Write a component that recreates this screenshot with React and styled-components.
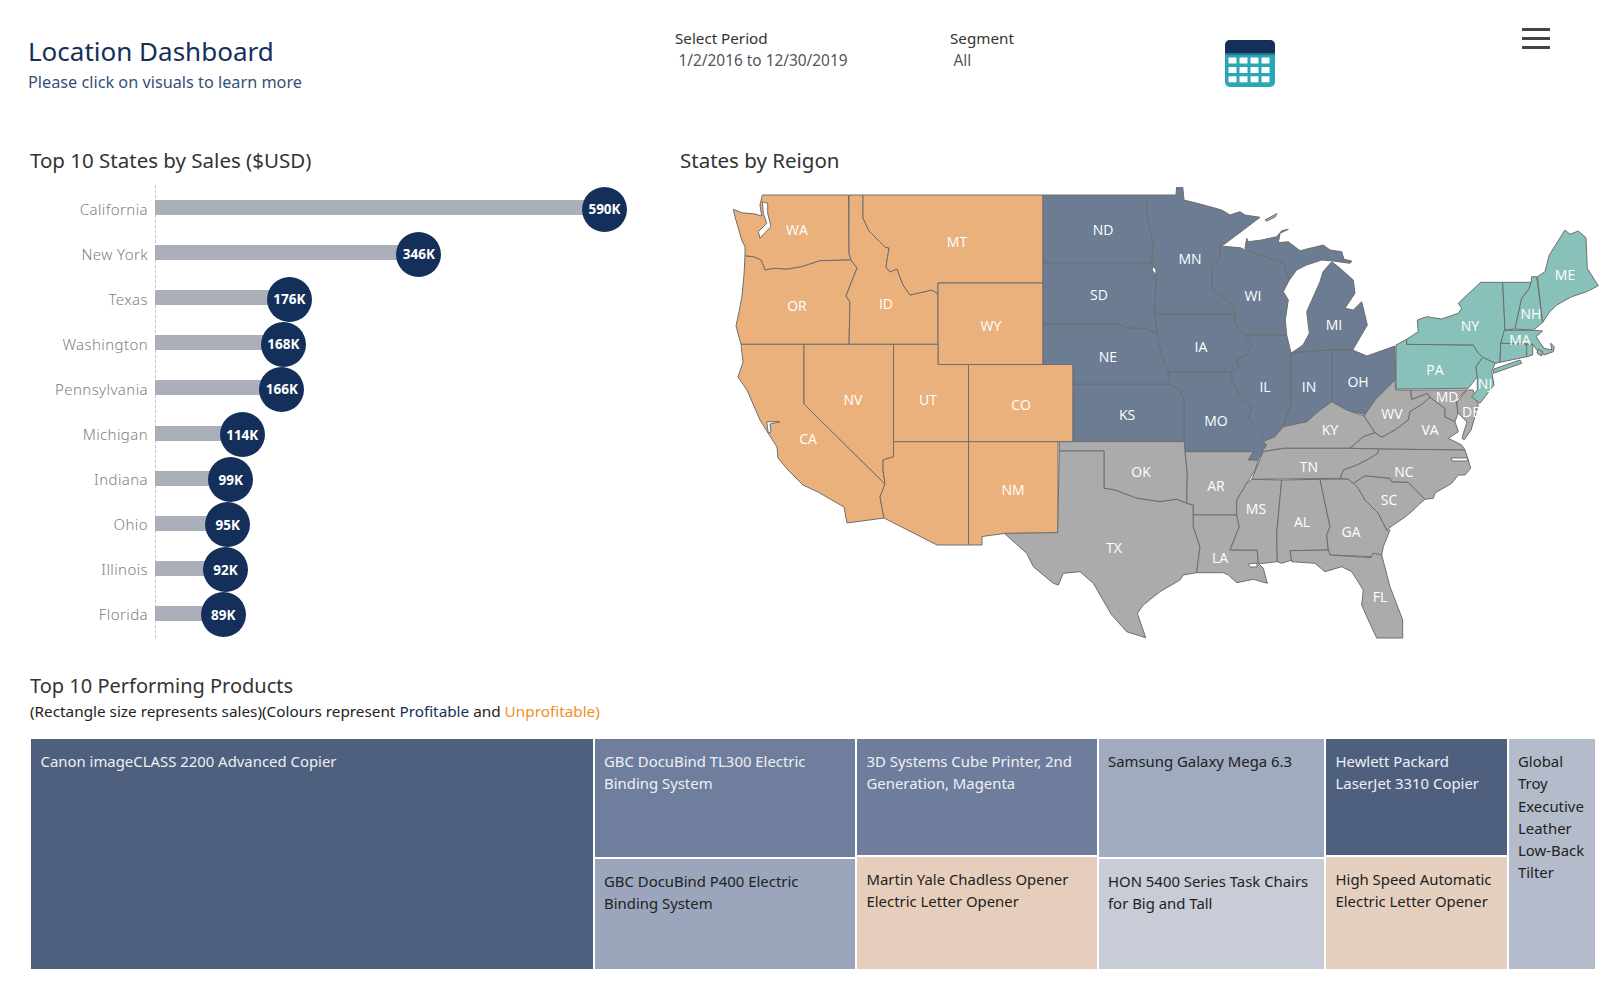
import React from 'react';
import styled, { createGlobalStyle } from 'styled-components';

const ORANGE = '#EBB17C';
const SLATE = '#6B7C93';
const GREY = '#ABABAB';
const TEAL = '#88C1B9';

const GlobalStyle = createGlobalStyle`
  html, body {
    margin: 0;
    padding: 0;
    background: #ffffff;
    font-family: 'Noto Sans', 'Open Sans', sans-serif;
  }
`;

const salesData = [
  { state: 'California', value: 590 },
  { state: 'New York', value: 346 },
  { state: 'Texas', value: 176 },
  { state: 'Washington', value: 168 },
  { state: 'Pennsylvania', value: 166 },
  { state: 'Michigan', value: 114 },
  { state: 'Indiana', value: 99 },
  { state: 'Ohio', value: 95 },
  { state: 'Illinois', value: 92 },
  { state: 'Florida', value: 89 },
];

// outlines are traced in page coordinates, the svg viewBox starts at 680,187
const states = [
  // west
  { fill: ORANGE, pts: '762.3,195 848.5,195 849,253 851,260 820,260.7 801.7,266.7 786.7,269.3 775,268.3 765,270 761,260 753.3,256.7 745,256 745,246.7 741.7,240 735,216.7 733.3,209.3 741.7,212.7 755,214 761.7,216 760,205' },
  { fill: ORANGE, pts: '745,256 753.3,256.7 761,260 765,270 775,268.3 786.7,269.3 801.7,266.7 820,260.7 851,260 857,268 851,283 846,296 850,302 849,344.3 741,344.3 736,326 739,312 742,296 744,275' },
  { fill: ORANGE, pts: '849,195 863,195 863,218 869,231 879,241 885,247 889,248 886,267 890,272 897,269 903,285 910,295 932,290 938,294 938,344.3 849,344.3 850,302 846,296 857,268 851,260 849,253' },
  { fill: ORANGE, pts: '863,195 1043,195 1043,283 938,283 938,294 932,290 910,295 903,285 897,269 890,272 886,267 889,248 885,247 879,241 869,231 863,218' },
  { fill: ORANGE, pts: '938,283 1043,283 1043,364.5 938,364.5' },
  { fill: ORANGE, pts: '741,344.3 804,344.3 804,404 885,484 880,497 884,518 847,523 844,507 818,492 803,485 788,470 778,458 777,447 768,433 760,420 747,390 738,377 743,362' },
  { fill: ORANGE, pts: '804,344.3 893.5,344.3 893.5,456.7 883,460 883,470 885,484 804,404' },
  { fill: ORANGE, pts: '893.5,344.3 938,344.3 938,364.5 968.5,364.5 968.5,441.7 893.5,441.7' },
  { fill: ORANGE, pts: '968.5,364.5 1073,364.5 1073,441.7 968.5,441.7' },
  { fill: ORANGE, pts: '893.5,441.7 968.5,441.7 968.5,545 937,545 884,518 880,497 885,484 883,470 883,460 893.5,456.7' },
  { fill: ORANGE, pts: '968.5,441.7 1058,441.7 1058,533 1004,533.5 982,536.5 982,545 968.5,545' },

  // midwest
  { fill: SLATE, pts: '1043,195 1146.7,195 1146.7,213 1150,225 1153,243 1155,262.7 1043,262.7' },
  { fill: SLATE, pts: '1043,262.7 1155,262.7 1152,270 1157,276 1155,315 1157,333 1147,329 1127,328 1117,324.3 1043,324.3' },
  { fill: SLATE, pts: '1043,324.3 1117,324.3 1127,328 1147,329 1157,333 1161,343 1165,366 1173,384.3 1073,384.3 1073,364.5 1043,364.5' },
  { fill: SLATE, pts: '1073,384.3 1170,384.3 1180,390 1184.3,400 1184.3,441.7 1073,441.7' },
  { fill: SLATE, pts: '1146.7,195 1176,195 1176.7,186 1182.7,186.7 1184,200 1196,203 1210,206.7 1221.7,210 1230,215 1240,211.7 1245,215 1260,217.3 1243.3,230 1223.3,245 1220,246 1219.3,258.3 1211.7,268.3 1211.7,288.3 1233.3,305 1235,314 1155,314 1156,270 1151.7,263.3 1153.3,243.3 1146.7,213.3' },
  { fill: SLATE, pts: '1220,246 1240,247.7 1250,251.7 1265,256.7 1283.3,263.3 1289.3,280 1283.3,291.7 1288.3,300 1285.3,320 1286.7,335 1245,335 1235,323.3 1235,314 1233.3,305 1211.7,288.3 1211.7,268.3 1219.3,258.3' },
  { fill: SLATE, pts: '1245,248.3 1246.7,238.3 1248.3,241.7 1261.7,240 1276.7,236.7 1281.7,230.7 1288.3,229.3 1280,233.3 1278.3,242.7 1288.3,241.7 1300,250.7 1323.3,245 1330,250 1341.7,251.7 1344,259.3 1351.7,261 1350,263.3 1333.3,261 1321.7,260 1306.7,265 1296.7,270 1289.3,280 1283.3,263.3 1265,256.7 1250,251.7' },
  { fill: SLATE, pts: '1331.7,261.7 1338.3,266.7 1353.3,280 1355,293.3 1345,308.3 1353.3,310 1361.7,301.7 1367.3,325 1352.7,350 1331.7,350 1291.7,352.7 1303,345 1309.3,333.3 1306.7,311.7 1320,281.7 1323,271.7' },
  { fill: SLATE, pts: '1155,314 1235,314 1235,323.3 1251,343.3 1248.3,353.3 1236.7,360 1239.3,366.7 1231.7,372.3 1168.3,372.3 1161,353.3 1157,333' },
  { fill: SLATE, pts: '1168.3,372.3 1231.7,372.3 1231.7,378.3 1240,396.7 1251.7,406.7 1248.3,418.3 1261.7,431.7 1263.3,441.7 1266.7,445 1258.3,460 1248.3,460 1253.3,451.7 1185,451.7 1184.3,441.7 1184.3,400 1180,390 1170,384.3' },
  { fill: SLATE, pts: '1245,335 1286.7,335 1291,352.7 1291,403.3 1283.3,426.7 1275,436.7 1266.7,440 1263.3,441.7 1261.7,431.7 1248.3,418.3 1251.7,406.7 1240,396.7 1231.7,378.3 1231.7,372.3 1239.3,366.7 1236.7,360 1248.3,353.3 1251,343.3' },
  { fill: SLATE, pts: '1291,352.7 1331.7,350 1331.7,401.7 1320,410 1306.7,421.7 1283.3,426.7 1291,403.3' },
  { fill: SLATE, pts: '1331.7,350 1352.7,350 1366.7,356 1395,346 1395.7,380 1378.3,400 1366.7,415 1346.7,410 1331.7,401.7' },

  // south
  { fill: GREY, pts: '1283.3,426.7 1306.7,421.7 1320,410 1331.7,401.7 1346.7,410 1364,416 1375,432.7 1363.3,436.7 1350,448.3 1283.3,448.3 1261.7,451.7 1266.7,445 1263.3,441.7 1266.7,440 1275,436.7' },
  { fill: GREY, pts: '1364,416 1375,400 1395,380 1395.7,390 1410.7,390 1411.7,399.3 1427.3,393.3 1430,397.3 1423.3,403.3 1410,411.7 1408.3,420 1395,430 1381.7,437.3 1375,432.7' },
  { fill: GREY, pts: '1375,432.7 1381.7,437.3 1395,430 1408.3,420 1410,411.7 1423.3,403.3 1430,397.3 1445,408.3 1445,416.7 1455,421.7 1458.3,431.7 1448.3,438.3 1461.7,445 1465,450 1378.3,449 1350,448.3 1363.3,436.7' },
  { fill: GREY, pts: '1410.7,390 1466.7,390 1456,400 1458,413 1455,421.7 1445,416.7 1445,408.3 1430,397.3 1427.3,393.3 1411.7,399.3' },
  { fill: GREY, pts: '1466.7,390 1473,390 1478.3,405 1471,430 1464,440 1462,438 1467,422 1458,413 1457,402' },
  { fill: GREY, pts: '1059.3,441.7 1184.3,441.7 1185,451.7 1187.3,473.3 1186.7,503.3 1176.7,499.3 1160,501.7 1136.7,498.3 1115,490 1104,488.3 1104,451 1059.3,451' },
  { fill: GREY, pts: '1059.3,451 1104,451 1104,488.3 1115,490 1136.7,498.3 1160,501.7 1176.7,499.3 1186.7,503.3 1193.3,505 1193.3,526.7 1200,546.7 1196.7,572.7 1183.3,575 1180,580 1160,591.7 1143.3,605 1137.3,613.3 1145.7,637.7 1126.7,631.7 1111.7,615 1093.3,583.3 1080,571.7 1063.3,573.3 1058.3,585 1053.3,583.3 1033.3,566.7 1026.7,553.3 1004.3,533.3 1057.7,532.7' },
  { fill: GREY, pts: '1185,451.7 1253.3,451.7 1248.3,460 1258.3,460 1255,470 1246.7,483.3 1236.7,500 1236.7,515 1193.3,515 1193.3,505 1186.7,503.3 1187.3,473.3' },
  { fill: GREY, pts: '1193.3,515 1236.7,515 1239.3,526.7 1230,550 1257.3,550 1258.3,563.3 1263.3,568.3 1267.3,583.3 1253.3,579.3 1236.7,582.7 1228.3,575 1223.3,572.7 1196.7,572.7 1200,546.7 1193.3,526.7' },
  { fill: GREY, pts: '1251.7,479.3 1281.7,480 1276.7,533.3 1277.3,561.7 1263.3,563.3 1258.3,563.3 1257.3,550 1230,550 1239.3,526.7 1236.7,515 1236.7,500 1246.7,483.3' },
  { fill: GREY, pts: '1281.7,480 1320,479.3 1330,526.7 1326.7,535 1328.3,550 1290,550.7 1291.7,560 1281.7,563.3 1277.3,561.7 1276.7,533.3' },
  { fill: GREY, pts: '1320,479.3 1348,479 1353.3,483.3 1358.3,488.3 1365,500 1378.3,513.3 1386.7,530 1390,530 1383.3,546.7 1381.7,555 1373.3,556.7 1330,555 1328.3,550 1326.7,535 1330,526.7' },
  { fill: GREY, pts: '1290,550.7 1328.3,550 1330,555 1371,557.7 1373.3,553 1381.7,555 1390,586.7 1402.7,620 1402.7,638 1376.7,638 1368.3,620 1361.7,605 1363.3,590 1351.7,571.7 1341.7,566.7 1325,571.7 1315,563.3 1291.7,561.7' },
  { fill: GREY, pts: '1353.3,483.3 1365,475.7 1390,478.3 1391.7,481.7 1408.3,482.3 1425,499.3 1418.3,505 1411.7,511.7 1403.3,518.3 1393.3,525 1386.7,530 1378.3,513.3 1365,500 1358.3,488.3' },
  { fill: GREY, pts: '1340,478.3 1343.3,470 1356.7,465 1366.7,460 1378.3,452.7 1378.3,449 1465,450 1469.3,463.3 1470.7,468.3 1465,475 1458.3,475 1451.7,483.3 1435,493 1433.3,498.3 1425,499.3 1408.3,482.3 1391.7,481.7 1390,478.3 1365,475.7 1353.3,483.3 1348,479' },
  { fill: GREY, pts: '1251.7,479.3 1263.3,451.7 1283.3,448.3 1350,448.3 1378.3,449 1378.3,452.7 1366.7,460 1356.7,465 1343.3,470 1340,478.3' },

  // northeast
  { fill: TEAL, pts: '1396,345 1406.7,339.3 1406.7,344.3 1473.3,345 1478.3,353.3 1482.7,357.3 1476,366.7 1477.3,376.7 1468.3,388.3 1396,389' },
  { fill: TEAL, pts: '1406.7,339.3 1418.3,331.7 1417.3,320 1426.7,316.7 1441.7,319 1458.3,313.3 1461.7,308.3 1458.3,303.3 1480.7,282.3 1502.7,282.3 1505,330 1500.7,343.3 1500,362.3 1495,363.3 1482.7,357.3 1478.3,353.3 1473.3,345 1406.7,344.3' },
  { fill: TEAL, pts: '1482.7,357.3 1495,363.3 1491.7,371.7 1494,385 1480,403.3 1471.7,396.7 1477.3,390 1477.3,376.7 1476,366.7' },
  { fill: TEAL, pts: '1502.7,282.3 1531,282.3 1529.3,288.3 1521.7,298.3 1515,329 1505,330' },
  { fill: TEAL, pts: '1531,282.3 1531.7,276.7 1536.7,276.7 1542.7,322.3 1533.3,330.3 1515,329 1521.7,298.3 1529.3,288.3' },
  { fill: TEAL, pts: '1537.3,276.7 1545,271.7 1549.3,255 1565,230 1570,234.3 1578.3,231 1586,237.7 1587.3,268.3 1598.3,285.7 1586.7,291.7 1571.7,296.7 1556.7,305 1549.3,312.3 1542.7,322.3' },
  { fill: TEAL, pts: '1504.3,330.3 1533.3,330.3 1542.7,331 1536,336.7 1544,348.3 1551.7,350 1550.7,343.3 1554.3,346.7 1553.3,351.7 1544,355 1536.7,350 1532.7,344.3 1500.7,343.3' },
  { fill: TEAL, pts: '1500.7,343.3 1526.7,344.3 1526.7,356.7 1500,362.3' },
  { fill: TEAL, pts: '1526.7,344.3 1532.7,344.3 1532.7,355 1526.7,356.7' },
  { fill: TEAL, pts: '1494,369 1520,360 1521.7,363.3 1493.3,373.3' },
];

// inlets and small islands that sit over the state fills
const waters = [
  { fill: '#fff', pts: '762.3,201.7 767.7,203.3 767.7,213.3 771,226.7 764.3,233.3 760,238.3 758.3,231.7 766.7,223.3 763.3,213.3' },
  { fill: '#fff', pts: '766.7,421.7 780,421.7 770,424 771,432 768.3,433' },
  { fill: '#fff', pts: '1248,564 1257,563 1257,567 1250,567' },
  { fill: '#fff', pts: '1451,458 1468,458 1467,461 1452,461' },
  { fill: GREY, pts: '1265,220 1277,213.5 1275,217 1267,221' },
  { fill: GREY, pts: '1538,349 1543,352 1541,356 1537,353' },
];

const labels = [
  ['WA', 797, 229], ['MT', 957, 241], ['ND', 1103, 229], ['SD', 1099, 294], ['OR', 797, 305], ['ID', 886, 303],
  ['WY', 991, 325], ['NE', 1108, 356], ['NV', 853, 399], ['UT', 928, 399], ['CO', 1021, 404], ['KS', 1127, 414],
  ['CA', 808, 438], ['MN', 1190, 258], ['WI', 1253, 295], ['IA', 1201, 346], ['MI', 1334, 324], ['IL', 1265, 386],
  ['IN', 1309, 386], ['OH', 1358, 381], ['MO', 1216, 420], ['KY', 1330, 429], ['WV', 1392, 413], ['VA', 1430, 429],
  ['MD', 1447, 396], ['DE', 1471, 411], ['NJ', 1485, 383], ['PA', 1435, 369], ['NY', 1470, 325], ['MA', 1520, 339],
  ['NH', 1531, 313], ['ME', 1565, 274], ['OK', 1141, 471], ['TN', 1309, 466], ['AR', 1216, 485], ['NC', 1404, 471],
  ['SC', 1389, 499], ['MS', 1256, 508], ['AL', 1302, 521], ['GA', 1351, 531], ['NM', 1013, 489], ['TX', 1114, 547],
  ['LA', 1220, 557], ['FL', 1380, 596],
];

const columns = [
  { width: 563.5, cells: [{ name: 'Canon imageCLASS 2200 Advanced Copier', bg: '#4F5F7E', light: true, height: 232 }] },
  { width: 262.5, cells: [
    { name: 'GBC DocuBind TL300 Electric Binding System', bg: '#6F7E9D', light: true, height: 120 },
    { name: 'GBC DocuBind P400 Electric Binding System', bg: '#9BA6BC', height: 112 },
  ] },
  { width: 241.5, cells: [
    { name: '3D Systems Cube Printer, 2nd Generation, Magenta', bg: '#6E7D9C', light: true, height: 117.5 },
    { name: 'Martin Yale Chadless Opener Electric Letter Opener', bg: '#E7CDBB', height: 114.5 },
  ] },
  { width: 227.5, cells: [
    { name: 'Samsung Galaxy Mega 6.3', bg: '#A0ABC0', height: 120 },
    { name: 'HON 5400 Series Task Chairs for Big and Tall', bg: '#C7CCD7', height: 112 },
  ] },
  { width: 182.5, cells: [
    { name: 'Hewlett Packard LaserJet 3310 Copier', bg: '#4F5F7E', light: true, height: 117.5 },
    { name: 'High Speed Automatic Electric Letter Opener', bg: '#E5D0C0', height: 114.5 },
  ] },
  { width: 88, cells: [{ name: 'Global Troy Executive Leather Low-Back Tilter', bg: '#B4BCCC', height: 232 }] },
];

const Page = styled.div`
  width: 1624px;
  height: 999px;
  overflow: hidden;
  display: flex;
  flex-direction: column;
`;

const Header = styled.header`
  height: 145px;
  display: flex;
  align-items: flex-start;
`;

const TitleBlock = styled.div`
  width: 647px;
  padding: 35px 0 0 28px;
`;

const Title = styled.h1`
  margin: 0;
  font-size: 26px;
  line-height: 32px;
  font-weight: 400;
  color: #14305a;
`;

const Subtitle = styled.div`
  margin-top: 5px;
  font-size: 16.25px;
  line-height: 20px;
  color: #35507a;
`;

const Filter = styled.div`
  width: 275px;
  padding-top: 28px;
`;

const FilterLabel = styled.div`
  font-size: 15.2px;
  line-height: 20px;
  color: #333;
`;

const FilterValue = styled.div`
  margin-top: 3px;
  padding-left: 3.5px;
  font-size: 15.4px;
  line-height: 20px;
  color: #555;
`;

const CalendarIcon = styled.svg`
  width: 50px;
  height: 47px;
  margin-top: 40px;
`;

const Hamburger = styled.div`
  width: 28px;
  margin: 28px 0 0 247px;
  display: flex;
  flex-direction: column;
  gap: 6px;

  span {
    height: 3px;
    background: #444;
  }
`;

const Charts = styled.div`
  height: 529px;
  display: flex;
`;

const BarSection = styled.section`
  width: 680px;
  padding-left: 30px;
  box-sizing: border-box;
`;

const MapSection = styled.section`
  width: 944px;
`;

const SectionTitle = styled.h2`
  margin: 0;
  height: 32px;
  font-size: 20.5px;
  line-height: 30px;
  font-weight: 400;
  color: #333;
`;

const BarList = styled.div`
  margin: 9.5px 0 0 -30px;
  position: relative;
`;

const Axis = styled.div`
  position: absolute;
  left: 155px;
  top: -2px;
  bottom: -1px;
  border-left: 1px dashed #c4c4c4;
`;

const BarRow = styled.div`
  height: 45.1px;
  display: flex;
  align-items: center;
`;

const BarLabel = styled.div`
  width: 148px;
  margin: 0 7px 1px 0;
  text-align: right;
  font-size: 15px;
  font-weight: 300;
  letter-spacing: 0.4px;
  color: #808080;
`;

const Bar = styled.div`
  position: relative;
  height: 15px;
  margin-bottom: 3px;
  background: #abafb9;
`;

const Bubble = styled.div`
  position: absolute;
  right: -23px;
  top: -13.5px;
  width: 45px;
  height: 45px;
  border-radius: 50%;
  background: #14305a;
  color: #fff;
  font-size: 13.5px;
  font-weight: 700;
  display: flex;
  align-items: center;
  justify-content: center;
  z-index: 1;
`;

const UsMap = styled.svg`
  display: block;
  width: 944px;
  height: 452px;
  margin-top: 9.5px;
`;

const StateShape = styled.polygon`
  stroke: #6e6e6e;
  stroke-width: 1;
  stroke-linejoin: round;
`;

const StateLabel = styled.text`
  font-family: 'Open Sans', 'Noto Sans', sans-serif;
  font-size: 14px;
  fill: #fff;
  text-anchor: middle;
  dominant-baseline: central;
`;

const Products = styled.section`
  padding-left: 30px;
`;

const ProductsTitle = styled(SectionTitle)`
  height: 24px;
  font-size: 20px;
  line-height: 24px;
`;

const ProductsNote = styled.div`
  margin-top: 2px;
  height: 26px;
  font-size: 15.3px;
  line-height: 22px;
  color: #222;
`;

const Profitable = styled.span`
  color: #14305a;
`;

const Unprofitable = styled.span`
  color: #f28e2b;
`;

const Treemap = styled.div`
  margin-top: 12px;
  display: flex;
  height: 232px;
`;

const TreeColumn = styled.div`
  flex: none;
  display: flex;
  flex-direction: column;
  width: ${p => p.$width}px;
`;

const TreeCell = styled.div`
  box-sizing: border-box;
  height: ${p => p.$height}px;
  padding: 11px 6px 0 9.5px;
  border: 0.5px solid #fff;
  background: ${p => p.$bg};
  color: ${p => (p.$light ? '#eef0f4' : '#222')};
  font-size: 14.9px;
  line-height: 22.3px;
`;

export default function App() {
  return (
    <Page>
      <GlobalStyle />
      <Header>
        <TitleBlock>
          <Title>Location Dashboard</Title>
          <Subtitle>Please click on visuals to learn more</Subtitle>
        </TitleBlock>
        <Filter>
          <FilterLabel>Select Period</FilterLabel>
          <FilterValue>1/2/2016 to 12/30/2019</FilterValue>
        </Filter>
        <Filter>
          <FilterLabel>Segment</FilterLabel>
          <FilterValue>All</FilterValue>
        </Filter>
        <CalendarIcon viewBox="0 0 50 47">
          <rect width="50" height="47" rx="5" fill="#2ba6b5" />
          <path d="M0 13.5V5a5 5 0 0 1 5-5h40a5 5 0 0 1 5 5v8.5z" fill="#14305a" />
          <rect y="13.5" width="50" height="1.5" fill="#1d7f92" />
          {[17.5, 27, 36.3].map(y =>
            [3.5, 14.5, 25.5, 36.5].map(x => <rect key={`${x}-${y}`} x={x} y={y} width="8" height="6" fill="#fff" />)
          )}
        </CalendarIcon>
        <Hamburger>
          <span />
          <span />
          <span />
        </Hamburger>
      </Header>

      <Charts>
        <BarSection>
          <SectionTitle>Top 10 States by Sales ($USD)</SectionTitle>
          <BarList>
            <Axis />
            {salesData.map(row => (
              <BarRow key={row.state}>
                <BarLabel>{row.state}</BarLabel>
                <Bar style={{ width: row.value * 0.761 }}>
                  <Bubble>{row.value}K</Bubble>
                </Bar>
              </BarRow>
            ))}
          </BarList>
        </BarSection>
        <MapSection>
          <SectionTitle>States by Reigon</SectionTitle>
          <UsMap viewBox="680 187 944 452">
            {states.map((s, i) => (
              <StateShape key={i} points={s.pts} fill={s.fill} />
            ))}
            {waters.map((s, i) => (
              <StateShape key={i} points={s.pts} fill={s.fill} />
            ))}
            {labels.map(([code, x, y]) => (
              <StateLabel key={code} x={x} y={y}>{code}</StateLabel>
            ))}
          </UsMap>
        </MapSection>
      </Charts>

      <Products>
        <ProductsTitle>Top 10 Performing Products</ProductsTitle>
        <ProductsNote>
          (Rectangle size represents sales)(Colours represent <Profitable>Profitable</Profitable> and{' '}
          <Unprofitable>Unprofitable)</Unprofitable>
        </ProductsNote>
        <Treemap>
          {columns.map(col => (
            <TreeColumn key={col.width} $width={col.width}>
              {col.cells.map(cell => (
                <TreeCell key={cell.name} $bg={cell.bg} $light={cell.light} $height={cell.height}>
                  {cell.name}
                </TreeCell>
              ))}
            </TreeColumn>
          ))}
        </Treemap>
      </Products>
    </Page>
  );
}
